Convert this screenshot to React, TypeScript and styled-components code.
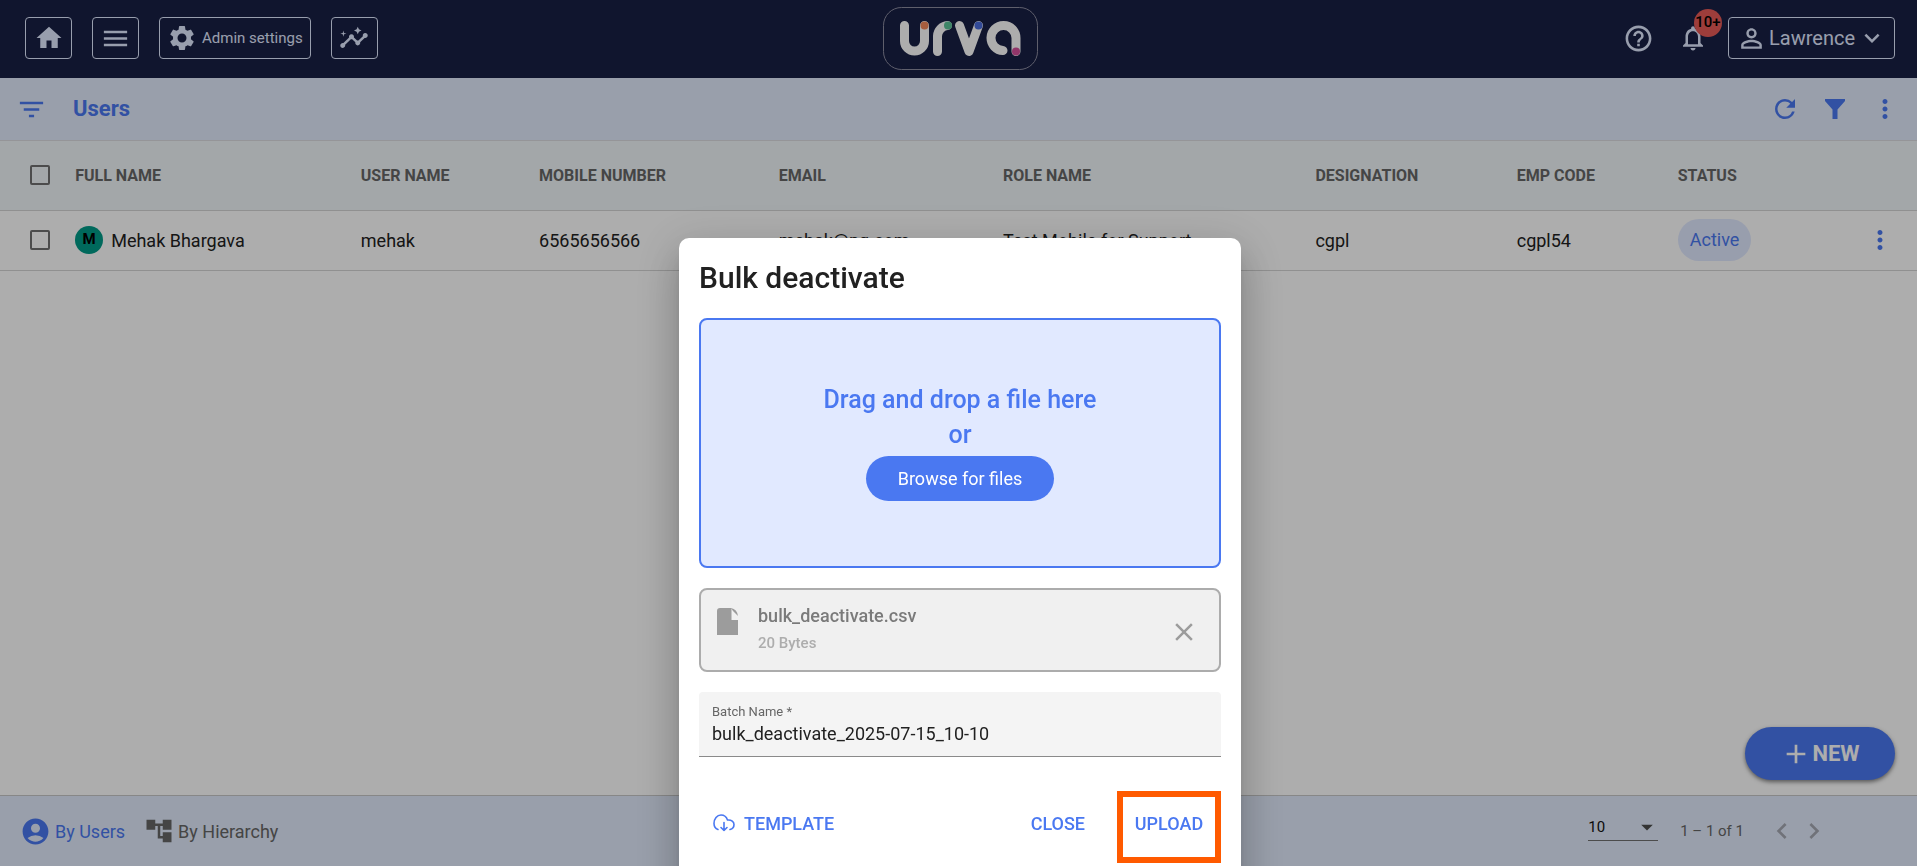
import React from "react";
import styled, { createGlobalStyle, css } from "styled-components";
import {
  MdHome, MdMenu, MdSettings, MdInsights, MdHelpOutline, MdNotificationsNone,
  MdPersonOutline, MdExpandMore, MdFilterList, MdRefresh, MdMoreVert,
  MdAccountCircle, MdAccountTree, MdArrowDropDown, MdChevronLeft, MdChevronRight,
  MdAdd, MdClose,
} from "react-icons/md";

const color = {
  navy: "#181f44",
  ice: "#e1e9ff",
  bar: "#e2ebfc",
  blue: "#4a78f1",
  head: "#f0f6fa",
  ink: "#212121",
  grey: "#666666",
  line: "#d5d5d5",
};

const Global = createGlobalStyle`
  * { box-sizing: border-box; }
  body { margin: 0; background: #fff; overflow: hidden; }
  body, button, input, select { font-family: Roboto, "Liberation Sans", sans-serif; }
  button { border: 0; background: none; padding: 0; cursor: pointer; color: inherit; }
  h1, h2, p { margin: 0; }
  svg { flex: none; display: block; }
`;

const Page = styled.div`
  position: relative;
  display: flex;
  flex-direction: column;
  min-height: 100vh;
  color: ${color.ink};
`;

const TopBar = styled.header`
  display: grid;
  grid-template-columns: 1fr auto 1fr;
  align-items: center;
  height: 78px;
  padding: 0 22px 2px 25px;
  background: ${color.navy};
  color: ${color.ice};
`;

const Group = styled.div<{ $gap: number; $end?: boolean }>`
  display: flex;
  align-items: center;
  gap: ${(p) => p.$gap}px;
  justify-content: ${(p) => (p.$end ? "flex-end" : "flex-start")};
`;

const OutlineButton = styled.button<{ $large?: boolean }>`
  display: flex;
  align-items: center;
  gap: ${(p) => (p.$large ? 2 : 5)}px;
  height: 42px;
  min-width: 47px;
  justify-content: center;
  padding: 0 7px;
  border: 1px solid ${color.ice};
  border-radius: 4px;
  font-size: ${(p) => (p.$large ? 20 : 15)}px;
`;

const IconButton = styled.button<{ $color?: string }>`
  position: relative;
  display: flex;
  color: ${(p) => p.$color ?? "inherit"};
`;

const Badge = styled.span`
  position: absolute;
  top: -14px;
  right: -14px;
  width: 28px;
  height: 28px;
  border-radius: 50%;
  background: #e75a58;
  color: #000;
  font-size: 15px;
  font-weight: 500;
  line-height: 26px;
  text-align: center;
`;

const SubBar = styled.div`
  display: flex;
  align-items: center;
  justify-content: space-between;
  height: 63px;
  padding: 0 17px 0 16px;
  background: ${color.bar};
  border-bottom: 1px solid #dcdce0;
  color: ${color.blue};
`;

const Heading = styled.h1`
  font-size: 22px;
  font-weight: 700;
  line-height: 28px;
`;

const Table = styled.table`
  width: 100%;
  table-layout: fixed;
  border-collapse: collapse;
  th, td { padding: 0 0 0 10px; text-align: left; white-space: nowrap; border-bottom: 1px solid ${color.line}; }
  th { height: 69px; background: ${color.head}; font-size: 16px; font-weight: 700; color: ${color.grey}; }
  td { height: 60px; font-size: 18px; }
  th:first-child, td:first-child { padding-left: 30px; }
  td:last-child { padding-right: 22px; }
`;

const Check = styled.input`
  appearance: none;
  display: block;
  width: 20px;
  height: 20px;
  margin: 0;
  border: 2px solid #707070;
  border-radius: 2px;
`;

const Avatar = styled.span`
  width: 28px;
  height: 28px;
  border-radius: 50%;
  background: #009b88;
  color: #000;
  font-size: 15px;
  font-weight: 700;
  line-height: 26px;
  text-align: center;
`;

const Pill = styled.span`
  display: inline-block;
  height: 42px;
  padding: 0 12px;
  border-radius: 21px;
  background: ${color.ice};
  color: ${color.blue};
  line-height: 42px;
`;

const Main = styled.main`
  flex: 1;
`;

const Fab = styled.button`
  position: absolute;
  right: 22px;
  bottom: 86px;
  display: flex;
  align-items: center;
  justify-content: center;
  width: 150px;
  height: 53px;
  border-radius: 27px;
  background: ${color.blue};
  color: #fff;
  font-size: 22px;
  font-weight: 700;
  box-shadow: 0 2px 4px rgba(0, 0, 0, 0.5);
`;

const Footer = styled.footer`
  display: flex;
  align-items: center;
  justify-content: space-between;
  height: 71px;
  padding: 0 87px 0 20px;
  background: ${color.bar};
  border-top: 1px solid #c8c8c8;
`;

const ViewTab = styled.button<{ $on?: boolean }>`
  display: flex;
  align-items: center;
  gap: 4px;
  font-size: 18px;
  color: ${(p) => (p.$on ? color.blue : color.grey)};
`;

const SelectBox = styled.div`
  position: relative;
  margin-bottom: 6px;
  color: #4d4d4d;
  svg { position: absolute; right: -3px; top: -2px; pointer-events: none; }
`;

const PageSize = styled.select`
  appearance: none;
  display: block;
  width: 70px;
  height: 26px;
  padding: 0 0 2px;
  border: 0;
  border-bottom: 1px solid #707070;
  border-radius: 0;
  background: none;
  font-size: 15px;
  color: #111;
`;

const Range = styled.span`
  font-size: 15px;
  color: ${color.grey};
`;

const Backdrop = styled.div`
  position: fixed;
  inset: 0;
  display: flex;
  justify-content: center;
  align-items: flex-start;
  padding: 238px 0 0 3px;
  overflow: hidden;
  background: rgba(0, 0, 0, 0.32);
`;

const Dialog = styled.section`
  display: flex;
  flex-direction: column;
  gap: 20px;
  width: 562px;
  padding: 20px 20px 40px;
  border-radius: 10px;
  background: #fff;
  box-shadow: 0 11px 15px -7px rgba(0, 0, 0, 0.2), 0 24px 38px 3px rgba(0, 0, 0, 0.14), 0 9px 46px 8px rgba(0, 0, 0, 0.12);
`;

const DialogTitle = styled.h2`
  font-size: 30px;
  font-weight: 500;
  line-height: 40px;
`;

const DropZone = styled.div`
  display: flex;
  flex-direction: column;
  align-items: center;
  justify-content: center;
  height: 250px;
  padding-bottom: 4px;
  border: 2px solid ${color.blue};
  border-radius: 8px;
  background: ${color.ice};
  color: ${color.blue};
`;

const DropText = styled.p`
  font-size: 25px;
  font-weight: 500;
  line-height: 35px;
`;

const BrowseButton = styled.button`
  height: 45px;
  width: 188px;
  margin-top: 4px;
  border-radius: 23px;
  background: ${color.blue};
  color: #fff;
  font-size: 18px;
`;

const FileCard = styled.div`
  display: flex;
  align-items: flex-start;
  height: 84px;
  padding: 18px 20px 0 16px;
  border: 2px solid #acacac;
  border-radius: 8px;
  background: #f0f0f0;
  color: #9c9c9c;
`;

const FileText = styled.div`
  flex: 1;
  padding-left: 20px;
  margin-top: -6px;
`;

const RemoveButton = styled(IconButton)`
  margin-top: 9px;
`;

const FileName = styled.p`
  font-size: 18px;
  font-weight: 500;
  line-height: 28px;
  color: #7a7a7a;
`;

const FileSize = styled.p`
  font-size: 15px;
  font-weight: 500;
  line-height: 26px;
  color: #adadad;
`;

const Field = styled.label`
  display: flex;
  flex-direction: column;
  height: 65px;
  padding: 12px 13px 0;
  border-bottom: 1px solid #8a8a8a;
  border-radius: 4px 4px 0 0;
  background: #f4f4f4;
  font-size: 13px;
  line-height: 16px;
  color: #666;
`;

const FieldInput = styled.input`
  width: 100%;
  height: 26px;
  padding: 0;
  border: 0;
  outline: 0;
  background: none;
  font-size: 18px;
  color: ${color.ink};
`;

const TextButton = styled.button<{ $push?: boolean }>`
  display: flex;
  align-items: center;
  gap: 9px;
  height: 40px;
  padding: 0 14px;
  color: ${color.blue};
  font-size: 18px;
  font-weight: 500;
  ${(p) => p.$push && css`margin-right: auto;`}
`;

const Actions = styled.div`
  display: flex;
  align-items: flex-start;
  margin-top: 14px;
  > ${TextButton} { margin-top: 12px; }
`;

const Highlight = styled.div`
  display: flex;
  justify-content: center;
  width: 104px;
  height: 72px;
  margin-left: 18px;
  padding-top: 6px;
  border: 6px solid #ff5a00;
`;

const Logo = () => (
  <svg width="155" height="63" viewBox="0 0 155 63" fill="none" role="img" aria-label="urva">
    <rect x="0.5" y="0.5" width="154" height="62" rx="18" stroke="#8c8ca0" />
    <g stroke="#fff" strokeWidth="9" strokeLinecap="round" strokeLinejoin="round">
      <path d="M21.500 18.500V34a10 10 0 0 0 20 0V18.500" />
      <path d="M54.500 44.500V29a11 11 0 0 1 10-10.500" />
      <path d="M76.500 18.500L86 44.500L95.500 18.500" />
      <path d="M120 43.500a12.500 12.500 0 1 1 13-12.500V44.500" />
    </g>
    <circle cx="41.500" cy="18.500" r="4" fill="#f58a5c" />
    <circle cx="65" cy="18.500" r="4" fill="#5cc498" />
    <circle cx="95.500" cy="18.500" r="4" fill="#4a6ee0" />
    <circle cx="133" cy="44.500" r="4" fill="#d8509c" />
  </svg>
);

const Funnel = () => (
  <svg width="20" height="20" viewBox="0 0 20 20" fill="currentColor">
    <path d="M0 0H20V2L12.500 10.500V20H7.500V10.500L0 2Z" />
  </svg>
);

const FileIcon = () => (
  <svg width="21" height="27" viewBox="0 0 21 27" fill="currentColor">
    <path d="M3 0H14.500V12H21V27H0V3A3 3 0 0 1 3 0Z" />
    <path d="M14 0Q20 1 21 8L16 3Z" />
  </svg>
);

const CloudDown = () => (
  <svg width="22" height="18" viewBox="0 0 22 18" fill="none" stroke="currentColor" strokeWidth="1.600" strokeLinecap="round" strokeLinejoin="round">
    <path d="M5 15.500C2.500 14.500 1 12.500 1 9.500C1 5 4 1 8 1C11.500 1 13.500 3 14.500 6C18.500 5.500 21 8 21 10.500C21 13 19.500 15 17 15.500" />
    <path d="M11 8.500V16.500M8 13.500L11 16.500L14 13.500" />
  </svg>
);

const columns = [
  { name: "FULL NAME", width: "14.9%" },
  { name: "USER NAME", width: "9.3%" },
  { name: "MOBILE NUMBER", width: "12.5%" },
  { name: "EMAIL", width: "11.7%" },
  { name: "ROLE NAME", width: "16.3%" },
  { name: "DESIGNATION", width: "10.5%" },
  { name: "EMP CODE", width: "8.4%" },
  { name: "STATUS", width: "9%" },
];

export default function App() {
  return (
    <Page>
      <Global />
      <TopBar>
        <Group $gap={20}>
          <OutlineButton aria-label="Home"><MdHome size={30} /></OutlineButton>
          <OutlineButton aria-label="Menu"><MdMenu size={31} /></OutlineButton>
          <OutlineButton><MdSettings size={30} />Admin settings</OutlineButton>
          <OutlineButton aria-label="Insights"><MdInsights size={30} /></OutlineButton>
        </Group>
        <Logo />
        <Group $gap={24} $end>
          <IconButton aria-label="Help"><MdHelpOutline size={31} /></IconButton>
          <Group $gap={20}>
            <IconButton aria-label="Notifications">
              <MdNotificationsNone size={30} />
              <Badge>10+</Badge>
            </IconButton>
            <OutlineButton $large><MdPersonOutline size={31} />Lawrence<MdExpandMore size={30} /></OutlineButton>
          </Group>
        </Group>
      </TopBar>
      <SubBar>
        <Group $gap={26}>
          <IconButton aria-label="Filter list"><MdFilterList size={31} /></IconButton>
          <Heading>Users</Heading>
        </Group>
        <Group $gap={25}>
          <IconButton aria-label="Refresh"><MdRefresh size={30} /></IconButton>
          <IconButton aria-label="Filter"><Funnel /></IconButton>
          <IconButton aria-label="More"><MdMoreVert size={30} /></IconButton>
        </Group>
      </SubBar>
      <Main>
        <Table>
          <colgroup>
            <col style={{ width: "3.4%" }} />
            {columns.map((c) => <col key={c.name} style={{ width: c.width }} />)}
            <col />
          </colgroup>
          <thead>
            <tr>
              <th><Check type="checkbox" aria-label="Select all" /></th>
              {columns.map((c) => <th key={c.name}>{c.name}</th>)}
              <th />
            </tr>
          </thead>
          <tbody>
            <tr>
              <td><Check type="checkbox" aria-label="Select Mehak Bhargava" /></td>
              <td><Group $gap={8}><Avatar>M</Avatar>Mehak Bhargava</Group></td>
              <td>mehak</td>
              <td>6565656566</td>
              <td>mehak@pg.com</td>
              <td>Test Mobile for Support</td>
              <td>cgpl</td>
              <td>cgpl54</td>
              <td><Pill>Active</Pill></td>
              <td><Group $gap={0} $end><IconButton $color={color.blue} aria-label="Row actions"><MdMoreVert size={30} /></IconButton></Group></td>
            </tr>
          </tbody>
        </Table>
      </Main>
      <Fab><MdAdd size={32} />NEW</Fab>
      <Footer>
        <Group $gap={19}>
          <ViewTab $on><MdAccountCircle size={31} />By Users</ViewTab>
          <ViewTab><MdAccountTree size={30} />By Hierarchy</ViewTab>
        </Group>
        <Group $gap={22}>
          <SelectBox>
            <PageSize aria-label="Rows per page"><option>10</option></PageSize>
            <MdArrowDropDown size={28} />
          </SelectBox>
          <Range>1 – 1 of 1</Range>
          <Group $gap={0}>
            <IconButton $color="#a6a9b3" aria-label="Previous page"><MdChevronLeft size={32} /></IconButton>
            <IconButton $color="#a6a9b3" aria-label="Next page"><MdChevronRight size={32} /></IconButton>
          </Group>
        </Group>
      </Footer>
      <Backdrop>
        <Dialog role="dialog" aria-modal="true" aria-labelledby="dialog-title">
          <DialogTitle id="dialog-title">Bulk deactivate</DialogTitle>
          <DropZone>
            <DropText>Drag and drop a file here</DropText>
            <DropText>or</DropText>
            <BrowseButton>Browse for files</BrowseButton>
          </DropZone>
          <FileCard>
            <FileIcon />
            <FileText>
              <FileName>bulk_deactivate.csv</FileName>
              <FileSize>20 Bytes</FileSize>
            </FileText>
            <RemoveButton aria-label="Remove file"><MdClose size={30} /></RemoveButton>
          </FileCard>
          <Field>
            Batch Name *
            <FieldInput defaultValue="bulk_deactivate_2025-07-15_10-10" />
          </Field>
          <Actions>
            <TextButton $push><CloudDown />TEMPLATE</TextButton>
            <TextButton>CLOSE</TextButton>
            <Highlight><TextButton>UPLOAD</TextButton></Highlight>
          </Actions>
        </Dialog>
      </Backdrop>
    </Page>
  );
}
